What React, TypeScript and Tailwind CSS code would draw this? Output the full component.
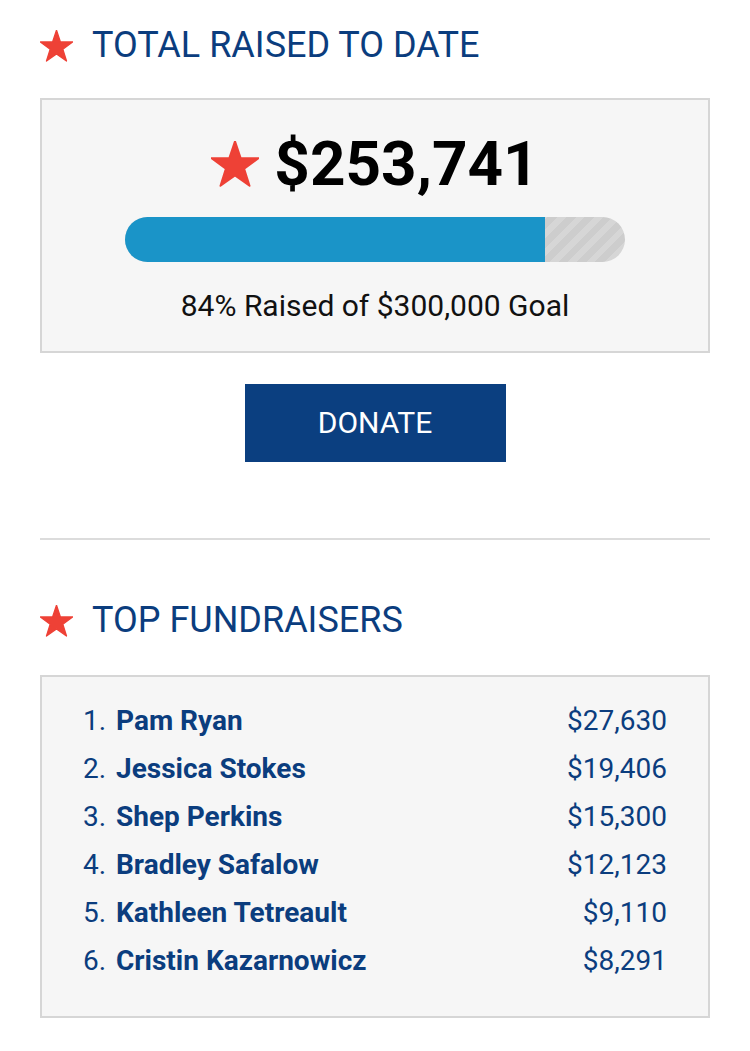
import React from "react";

const Star = ({ className }: { className?: string }) => (
  <svg viewBox="0 0 100 95" className={className}>
    <polygon
      points="50,0 61.8,35.3 99,35.3 69.1,57.4 80.3,93 50,71.3 19.7,93 30.9,57.4 1,35.3 38.2,35.3"
      fill="#ee4136"
      stroke="#ee4136"
      strokeWidth="4"
      strokeLinejoin="round"
    />
  </svg>
);

const rows = [
  ["Pam Ryan", "$27,630"],
  ["Jessica Stokes", "$19,406"],
  ["Shep Perkins", "$15,300"],
  ["Bradley Safalow", "$12,123"],
  ["Kathleen Tetreault", "$9,110"],
  ["Cristin Kazarnowicz", "$8,291"],
];

export default function App() {
  return (
    <div
      className="w-[750px] min-h-[1051px] bg-white px-[40px] pt-[24px]"
      style={{ fontFamily: "Roboto, 'Liberation Sans', sans-serif" }}
    >
      <div className="flex items-center h-[43px]">
        <Star className="w-[33px] h-[32px] shrink-0" />
        <h2 className="ml-[19px] text-[36px] leading-[43px] text-[#0b3d7e] font-normal">
          TOTAL RAISED TO DATE
        </h2>
      </div>

      <div className="mt-[31px] border-2 border-[#d6d6d6] bg-[#f6f6f6] pt-[28px] pb-[28px] flex flex-col items-center">
        <div className="flex items-center h-[72px]">
          <Star className="w-[48px] h-[46px] shrink-0" />
          <span className="ml-[15px] text-[62px] leading-[72px] font-bold text-black">
            $253,741
          </span>
        </div>
        <div className="mt-[17px] w-[500px] h-[45px] rounded-full overflow-hidden flex bg-[repeating-linear-gradient(135deg,#cdcdcd_0px,#cdcdcd_7px,#d6d6d6_7px,#d6d6d6_13px)]">
          <div className="h-full w-[84%] bg-[#1a94c8]" />
        </div>
        <div className="mt-[26px] text-[30px] leading-[35px] text-[#111]">
          84% Raised of $300,000 Goal
        </div>
      </div>

      <div className="flex justify-center mt-[31px]">
        <button className="w-[261px] h-[78px] bg-[#0b3f80] text-white text-[30px] leading-none font-normal">
          DONATE
        </button>
      </div>

      <div className="mt-[76px] h-[2px] bg-[#dcdcdc]" />

      <div className="mt-[59px] flex items-center h-[43px]">
        <Star className="w-[33px] h-[32px] shrink-0" />
        <h2 className="ml-[19px] text-[36px] leading-[43px] text-[#0b3d7e] font-normal">
          TOP FUNDRAISERS
        </h2>
      </div>

      <div className="mt-[33px] border-2 border-[#d6d6d6] bg-[#f6f6f6] pt-[20px] pb-[31px] pl-[41px] pr-[41px]">
        {rows.map(([name, amt], i) => (
          <div key={name} className="flex items-center h-[48px] text-[28px] leading-[48px] text-[#0b3d7e]">
            <span className="w-[33px] shrink-0">{i + 1}.</span>
            <span className="font-bold flex-1">{name}</span>
            <span>{amt}</span>
          </div>
        ))}
      </div>
    </div>
  );
}
